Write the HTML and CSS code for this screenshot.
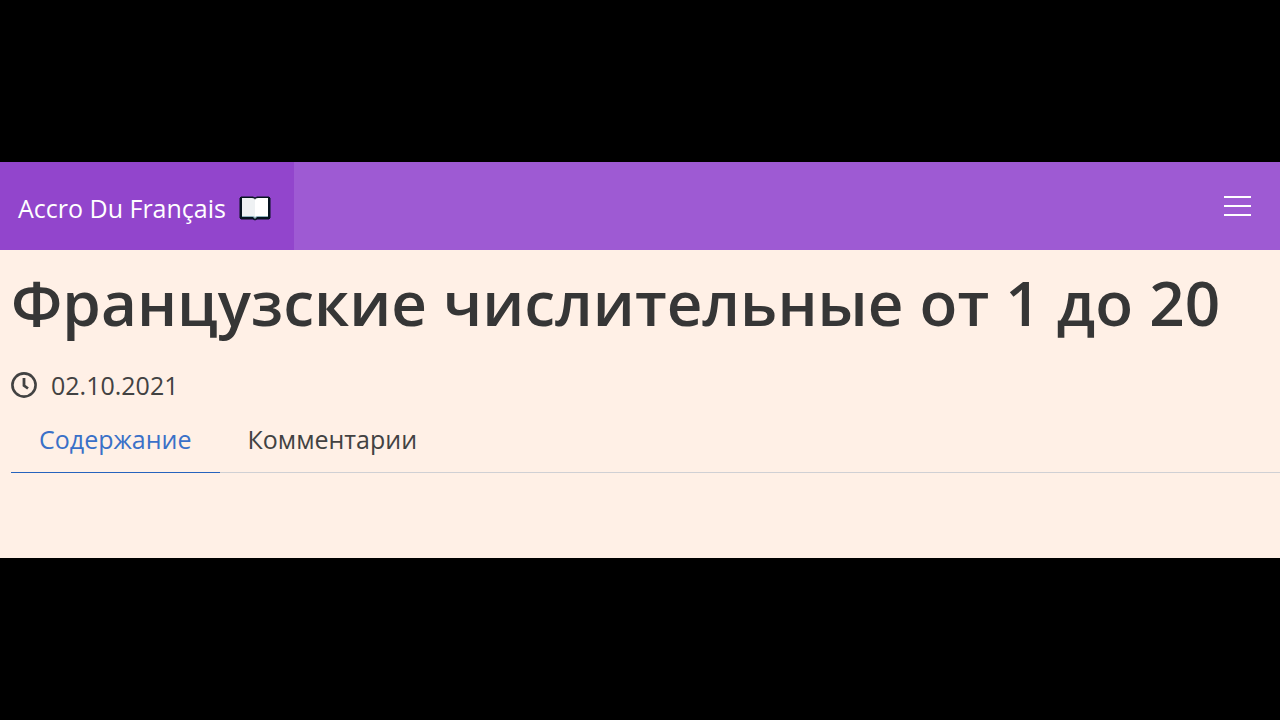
FILE: index.html
```
<!DOCTYPE html>
<html lang="ru">
<head>
  <meta charset="UTF-8" />
  <meta name="viewport" content="width=device-width, initial-scale=1.0"/>
  <title>Французские числительные от 1 до 20</title>
  <link rel="stylesheet" href="styles.css">
</head>
<body>
  <div class="page">
    <nav class="navbar">
      <a class="brand" href="#">
        <span>Accro Du Français</span>
        <svg class="book" viewBox="0 0 32 26" aria-hidden="true">
          <path d="M2 2h12l2 1 2-1h12l1 1v20l-1 1H18l-2 1-2-1H2l-1-1V3z" fill="#071420" stroke="#071420" stroke-linejoin="round"/>
          <path d="M3 20h26v2H18l-2 2-2-2H3z" fill="#8fb3bd"/>
          <path d="M3 3h10q3 0 3 2v17q-1-1-3-1H3z" fill="#eef1f3"/>
          <path d="M29 3H19q-3 0-3 2v17q1-1 3-1h10z" fill="#fff"/>
        </svg>
      </a>
      <button class="burger" type="button" aria-label="Меню">
        <span></span>
        <span></span>
        <span></span>
      </button>
    </nav>

    <main class="content">
      <h1>Французские числительные от 1 до 20</h1>

      <div class="date">
        <svg class="clock" viewBox="0 0 26 26" fill="none" stroke="#424242" aria-hidden="true">
          <circle cx="13" cy="13" r="11.6" stroke-width="2.6"/>
          <path d="M13 6v7.5l4 3" stroke-width="2.8"/>
        </svg>
        <time datetime="2021-10-02">02.10.2021</time>
      </div>

      <div class="tabs">
        <a class="tab active" href="#content">Содержание</a>
        <a class="tab" href="#comments">Комментарии</a>
      </div>
    </main>
  </div>
</body>
</html>
```
FILE: styles.css
```
* {
  box-sizing: border-box;
}
body {
  margin: 0;
  min-height: 100vh;
  display: flex;
  flex-direction: column;
  justify-content: center;
  background-color: #000;
  color: #424242;
  font-family: "Open Sans", "Noto Sans", sans-serif;
  font-size: 25px;
  line-height: 40px;
}
.page {
  background-color: #fff0e6;
}
.navbar {
  display: flex;
  justify-content: space-between;
  background-color: #9e5ad3;
}
.brand {
  display: flex;
  align-items: center;
  gap: 13px;
  padding: 26px 23px 22px 18px;
  background-color: #9245cc;
  color: #fff;
  text-decoration: none;
}
.book {
  width: 32px;
  height: 26px;
}
.burger {
  display: flex;
  flex-direction: column;
  justify-content: center;
  gap: 7px;
  padding: 0 29px;
  border: none;
  background: none;
  cursor: pointer;
}
.burger span {
  width: 27px;
  height: 2px;
  background-color: #fff;
}
.content {
  padding: 14px 0 85px 11px;
}
h1 {
  margin: 0;
  color: #363636;
  font-size: 62px;
  font-weight: 600;
  line-height: 76px;
}
.date {
  display: flex;
  align-items: center;
  gap: 14px;
  margin-top: 25px;
}
.clock {
  width: 26px;
  height: 26px;
}
.tabs {
  display: flex;
  border-bottom: 1px solid #d0d0d4;
}
.tab {
  margin-bottom: -1px;
  padding: 14px 28px 13px;
  border-bottom: 1px solid transparent;
  color: #424242;
  text-decoration: none;
}
.tab.active {
  border-bottom-color: #2663bd;
  color: #3a70c8;
}
```
